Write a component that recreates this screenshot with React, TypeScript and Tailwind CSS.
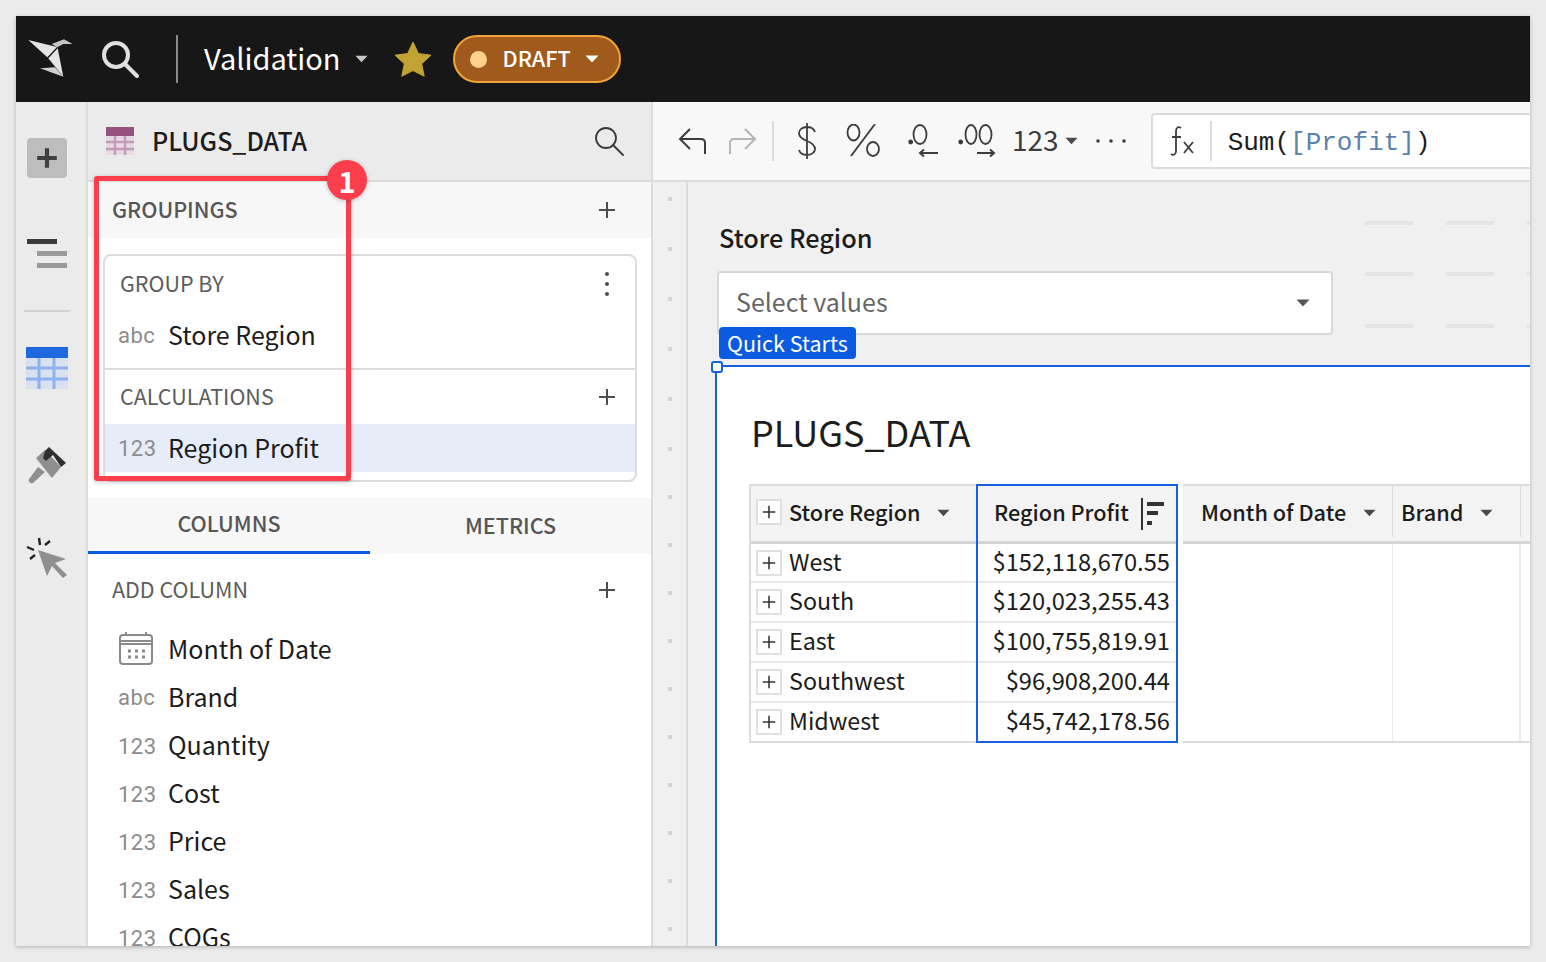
const sans = "font-['Noto_Sans_CJK_SC','Noto_Sans',sans-serif]"

function Caret({ className = 'w-[14px] h-[8px]', color = '#4a4a4a' }: { className?: string; color?: string }) {
  return (
    <svg className={className} viewBox="0 0 14 8">
      <path d="M0.5 0.5h13L7 7.5z" fill={color} />
    </svg>
  )
}

function Plus({ size = 18, color = '#4d4d4d', weight = 2 }: { size?: number; color?: string; weight?: number }) {
  return (
    <svg width={size} height={size} viewBox="0 0 18 18" fill="none" stroke={color} strokeWidth={weight}>
      <path d="M9 1v16M1 9h16" />
    </svg>
  )
}

function TypeTag({ label, low }: { label: string; low?: boolean }) {
  return (
    <span className={`w-[37px] text-[22px] leading-[30px] text-[#8c8c8c] font-['Roboto',sans-serif] tracking-[0.5px] shrink-0 ${low ? 'mt-1' : 'mt-[2px]'}`}>
      {label}
    </span>
  )
}

function FieldRow({ tag, name }: { tag: string; name: string }) {
  return (
    <div className="h-12 flex items-center gap-[13px] pl-[30px]">
      <TypeTag label={tag} low={tag === '123'} />
      <span className="mb-[2px] text-[25px] leading-[34px] text-[#1c1c1c]">{name}</span>
    </div>
  )
}

function RailButtons() {
  return (
    <div className="w-[72px] shrink-0 bg-[#ebebeb] border-r-2 border-[#dcdcdc] flex flex-col items-center pt-9 pr-[9px]">
      <div className="w-10 h-10 rounded bg-[#bdbdbd] flex items-center justify-center">
        <Plus size={22} color="#404040" weight={3.4} />
      </div>
      <svg className="mt-[60px]" width="42" height="32" viewBox="0 0 42 32">
        <rect x="1" y="1" width="30" height="5" fill="#3b3b3b" />
        <rect x="11" y="13" width="30" height="5" fill="#9a9a9a" />
        <rect x="11" y="25" width="30" height="5" fill="#9a9a9a" />
      </svg>
      <div className="mt-[40px] w-[46px] h-[2px] bg-[#d4d4d4]" />
      <svg className="mt-[35px]" width="42" height="42" viewBox="0 0 42 42">
        <rect width="42" height="42" fill="#d9e1f0" />
        <rect width="42" height="11" fill="#1f69e0" />
        <path d="M13 11v31M28 11v31M0 21h42M0 32h42" stroke="#8db2ee" strokeWidth="3" />
      </svg>
      <svg className="mt-[58px]" width="40" height="38" viewBox="0 0 40 38">
        <path d="M9 11L18 3L34 20L25 31z" fill="#8f8f8f" />
        <path d="M11 20L2 32a3 3 0 0 0 4 4L18 25z" fill="#8f8f8f" />
        <path d="M10.700 13L24 30" stroke="#b8b8b8" strokeWidth="1" />
        <path d="M22 0L39 16L34 20L26 8L19 14L16 11L18 4z" fill="#303030" />
      </svg>
      <svg className="mt-[52px]" width="42" height="42" viewBox="0 0 42 42">
        <path d="M12 13l28 9-11 4 12 12-4 3-11-12-5 10z" fill="#8f8f8f" />
        <path d="M13 1l1 7M24 4l-5 4M1 10l7 3M9 18l-5 4" stroke="#222" strokeWidth="2.400" />
      </svg>
    </div>
  )
}

function TopBar() {
  return (
    <div className="h-[86px] shrink-0 bg-[#171717] flex items-center pl-[12px]">
      <svg width="46" height="46" viewBox="0 0 46 46" className="mt-[-2px]">
        <path d="M0.300 5L29 12L19.300 22.300z" fill="#e4e4e4" />
        <path d="M23.700 9L36 4.300L44.700 9L35.300 9L29.300 12.300z" fill="#c4c4c4" />
        <path d="M20.300 23.300L29.700 13.300L35.300 41.700z" fill="#e4e4e4" />
        <path d="M12 33.300L27 32.300L35.300 41.700z" fill="#d0d0d0" />
      </svg>
      <svg className="ml-[27px]" width="38" height="38" viewBox="0 0 38 38" fill="none" stroke="#e0e0e0" strokeWidth="4" strokeLinecap="round">
        <circle cx="15" cy="15" r="12" />
        <path d="M24 24l12 12" />
      </svg>
      <div className="ml-[37px] w-[2px] h-12 bg-[#8a8a8a]" />
      <span className="ml-[26px] mb-[4px] text-[29px] leading-10 text-white">Validation</span>
      <Caret className="ml-[14px] w-[13px] h-[8px]" color="#c9c9c9" />
      <svg className="ml-[26px]" width="38" height="36" viewBox="0 0 38 36">
        <path d="M19 1l5.4 11.6 12.6 1.6-9.3 8.6 2.500 12.400L19 29.600 7.800 35.200l2.500-12.400L1 14.200l12.600-1.600z" fill="#c1a233" stroke="#c1a233" strokeLinejoin="round" />
      </svg>
      <div className="ml-[21px] w-[168px] h-12 rounded-full bg-[#a05a1c] border-2 border-[#f2a33a] flex items-center pl-[15px]">
        <span className="w-[17px] h-[17px] rounded-full bg-[#fdd28a]" />
        <span className="ml-[16px] mb-[2px] text-[21.700px] leading-7 font-medium text-white">DRAFT</span>
        <Caret className="ml-[14px] w-[14px] h-[8px]" color="#ffffff" />
      </div>
    </div>
  )
}

function SidePanel() {
  return (
    <div className="w-[565px] shrink-0 bg-white border-r-2 border-[#dcdcdc] flex flex-col overflow-hidden">
      <div className="h-[80px] shrink-0 bg-[#ebebeb] border-b-2 border-[#dcdcdc] flex items-center pl-[18px] pr-[27px]">
        <svg width="28" height="28" viewBox="0 0 28 28">
          <rect width="28" height="28" fill="#e9d9e5" />
          <rect width="28" height="9" fill="#96517f" />
          <path d="M9 9v19M19 9v19M0 15h28M0 22h28" stroke="#c39cb6" strokeWidth="2.500" />
        </svg>
        <span className="ml-[18px] mb-[2px] text-[25px] leading-9 font-medium text-[#1c1c1c]">PLUGS_DATA</span>
        <svg className="ml-auto" width="30" height="30" viewBox="0 0 30 30" fill="none" stroke="#3a3a3a" strokeWidth="1.800" strokeLinecap="round">
          <circle cx="12" cy="12" r="10" />
          <path d="M19 19l10 10" />
        </svg>
      </div>
      <div className="h-[56px] shrink-0 bg-[#f7f7f7] flex items-center justify-between pl-6 pr-[35px]">
        <span className="mb-[2px] text-[21.500px] leading-7 font-medium text-[#565656]">GROUPINGS</span>
        <Plus />
      </div>
      <div className="pt-4 pl-[15px] pr-[14px] pb-4 shrink-0">
        <div className="h-[228px] border-2 border-[#dcdcdc] rounded-lg flex flex-col">
          <div className="h-[114px] border-b-2 border-[#dcdcdc] shrink-0 flex flex-col">
            <div className="h-[56px] shrink-0 flex items-center justify-between pl-[15px] pr-[26px]">
              <span className="mb-[2px] text-[21.500px] leading-7 text-[#5c5c5c]">GROUP BY</span>
              <svg width="4" height="26" viewBox="0 0 4 26" fill="#4d4d4d">
                <circle cx="2" cy="3" r="2" />
                <circle cx="2" cy="13" r="2" />
                <circle cx="2" cy="23" r="2" />
              </svg>
            </div>
            <div className="flex items-center gap-[13px] pl-[13px] h-[45px]">
              <TypeTag label="abc" />
              <span className="mb-[2px] text-[25px] leading-[34px] text-[#1c1c1c]">Store Region</span>
            </div>
          </div>
          <div className="h-[54px] shrink-0 flex items-center justify-between pl-[15px] pr-[19px]">
            <span className="mb-[2px] text-[21.500px] leading-7 text-[#5c5c5c]">CALCULATIONS</span>
            <Plus />
          </div>
          <div className="h-12 bg-[#e6edf9] flex items-center gap-[13px] pl-[13px] shrink-0">
            <TypeTag label="123" />
            <span className="mb-[2px] text-[25px] leading-[34px] text-[#1c1c1c]">Region Profit</span>
          </div>
        </div>
      </div>
      <div className="h-[56px] shrink-0 bg-[#f7f7f7] flex">
        <div className="w-[282px] border-b-[3px] border-[#0a5be0] flex items-center justify-center pb-1 text-[21.500px] leading-7 font-medium text-[#565656]">COLUMNS</div>
        <div className="flex-1 flex items-center justify-center pb-[2px] text-[21.500px] leading-7 font-medium text-[#565656]">METRICS</div>
      </div>
      <div className="h-[71px] shrink-0 flex items-center justify-between pl-6 pr-[35px]">
        <span className="mb-[2px] text-[21.500px] leading-7 text-[#5c5c5c]">ADD COLUMN</span>
        <Plus />
      </div>
      <div className="flex flex-col">
        <div className="h-12 flex items-center gap-[14px] pl-[30px]">
          <svg className="w-[37px] shrink-0 ml-[-1px]" width="37" height="34" viewBox="0 0 37 34" fill="none" stroke="#8a8a8a" strokeWidth="2">
            <rect x="3" y="3" width="32" height="29" rx="3" />
            <path d="M3 9h32M3 12h32M9 0v4M29 0v4" />
            <path d="M11 19h3M18 19h3M25 19h3M11 25h3M18 25h3M25 25h3" strokeWidth="3" />
          </svg>
          <span className="mb-[2px] text-[25px] leading-[34px] text-[#1c1c1c]">Month of Date</span>
        </div>
        <FieldRow tag="abc" name="Brand" />
        <FieldRow tag="123" name="Quantity" />
        <FieldRow tag="123" name="Cost" />
        <FieldRow tag="123" name="Price" />
        <FieldRow tag="123" name="Sales" />
        <FieldRow tag="123" name="COGs" />
      </div>
    </div>
  )
}

function Toolbar() {
  return (
    <div className="h-[80px] shrink-0 bg-[#f8f8f8] border-b-2 border-[#dcdcdc] flex items-center pl-[25px] text-[#3d3d3d]">
      <svg width="30" height="28" viewBox="0 0 30 28" fill="none" stroke="#3d3d3d" strokeWidth="2">
        <path d="M12 2L2 12l10 10M2 12h21q4 0 4 4v11" />
      </svg>
      <svg className="ml-[19px]" width="30" height="28" viewBox="0 0 30 28" fill="none" stroke="#b5b5b5" strokeWidth="2">
        <path d="M18 2l10 10-10 10M28 12H7q-4 0-4 4v11" />
      </svg>
      <div className="ml-[15px] w-[2px] h-10 bg-[#dcdcdc]" />
      <svg className="ml-[21px]" width="24" height="36" viewBox="0 0 24 36" fill="none" stroke="#3d3d3d" strokeWidth="1.800">
        <path d="M20 9c-1-3-4-5-8-5-5 0-8 3-8 6 0 4 3 6 8 8s8 4 8 8c0 3-3 6-8 6-4 0-7-2-8-5M12 0v36" />
      </svg>
      <svg className="ml-[26px]" width="36" height="34" viewBox="0 0 36 34" fill="none" stroke="#3d3d3d" strokeWidth="1.800">
        <ellipse cx="8.500" cy="8.500" rx="6" ry="8" />
        <ellipse cx="28" cy="25" rx="6" ry="7" />
        <path d="M30 0L6 32" />
      </svg>
      <svg className="ml-[26px]" width="32" height="34" viewBox="0 0 32 34" fill="none" stroke="#3d3d3d" strokeWidth="1.800">
        <ellipse cx="13" cy="10.500" rx="6.500" ry="9.500" />
        <circle cx="3.700" cy="18" r="1.500" fill="#3d3d3d" />
        <path d="M31 29H13M17 25.500l-4 3.500 4 3.500" strokeWidth="2" />
      </svg>
      <svg className="ml-[19px]" width="38" height="34" viewBox="0 0 38 34" fill="none" stroke="#3d3d3d" strokeWidth="1.800">
        <ellipse cx="13" cy="10.500" rx="5.500" ry="9.500" />
        <ellipse cx="27.500" cy="10.500" rx="6" ry="9.500" />
        <circle cx="2.700" cy="18" r="1.500" fill="#3d3d3d" />
        <path d="M19 29h17M32 25.500l4 3.500-4 3.500" strokeWidth="2" />
      </svg>
      <span className="ml-4 mb-[2px] mt-[-3px] text-[28px] leading-9 text-[#3d3d3d]">123</span>
      <Caret className="ml-[6px] w-[13px] h-[8px]" />
      <svg className="ml-[18px]" width="30" height="4" viewBox="0 0 30 4" fill="#3d3d3d">
        <circle cx="2" cy="2" r="1.800" />
        <circle cx="15" cy="2" r="1.800" />
        <circle cx="28" cy="2" r="1.800" />
      </svg>
      <div className="ml-[25px] flex-1 h-[56px] bg-white border-2 border-r-0 border-[#dcdcdc] rounded-l flex items-center">
        <svg className="ml-[16px] mr-[15px] shrink-0" width="26" height="32" viewBox="0 0 26 32" fill="none" stroke="#3d3d3d" strokeWidth="1.800">
          <path d="M12 3c-3-2-5 0-5 3v20c0 3-2 5-5 3M3 12h9M15 17l9 11M24 17l-9 11" />
        </svg>
        <div className="w-[2px] h-10 bg-[#dcdcdc]" />
        <span className="ml-[16px] mt-[3px] text-[26px] leading-8 text-[#1c1c1c] font-['Liberation_Mono',monospace]">
          Sum(<span className="text-[#5a82ad]">[Profit]</span>)
        </span>
      </div>
    </div>
  )
}

function ExpandBox() {
  return (
    <span className="ml-[5px] w-[26px] h-[26px] shrink-0 border-2 border-[#e0e0e0] bg-white flex items-center justify-center">
      <Plus size={14} color="#333333" />
    </span>
  )
}

const rows = [
  { region: 'West', profit: '$152,118,670.55' },
  { region: 'South', profit: '$120,023,255.43' },
  { region: 'East', profit: '$100,755,819.91' },
  { region: 'Southwest', profit: '$96,908,200.44' },
  { region: 'Midwest', profit: '$45,742,178.56' },
]

const rowHeight = ['h-[39px]', 'h-10', 'h-10', 'h-10', 'h-[38px]']

function DataTable() {
  return (
    <div className="flex items-start w-[900px] ml-[-2px]">
      {/* region column */}
      <div className="w-[227px] shrink-0 border-2 border-r-0 border-[#dcdcdc] bg-white">
        <div className="h-[51px] pb-1 bg-[#f3f3f3] border-b-[3px] border-[#d4d4d4] box-content flex items-center">
          <ExpandBox />
          <span className="ml-[7px] text-[21.700px] leading-8 font-medium text-[#1c1c1c]">Store Region</span>
          <Caret className="ml-[16px] w-[13px] h-[8px] mt-[2px]" />
        </div>
        {rows.map((r, i) => (
          <div key={r.region} className={`${rowHeight[i]} flex items-center ${i < 4 ? 'border-b-2 border-[#e8e8e8]' : ''}`}>
            <ExpandBox />
            <span className="ml-[7px] mb-1 text-[23.300px] leading-8 text-[#1c1c1c]">{r.region}</span>
          </div>
        ))}
      </div>
      {/* selected column */}
      <div className="w-[202px] shrink-0 border-2 border-[#1560e0] bg-white">
        <div className="h-[51px] pb-1 bg-[#f3f3f3] border-b-[3px] border-[#d4d4d4] box-content flex items-center pl-[16px] whitespace-nowrap">
          <span className="text-[21.700px] leading-8 font-medium text-[#1c1c1c]">Region Profit</span>
          <svg className="ml-[12px] mt-[4px] shrink-0" width="24" height="32" viewBox="0 0 24 32">
            <rect x="0" y="0" width="2" height="32" fill="#333333" />
            <rect x="6" y="4" width="17" height="4" fill="#333333" />
            <rect x="6" y="13" width="11" height="4" fill="#333333" />
            <rect x="6" y="23" width="5" height="4" fill="#333333" />
          </svg>
        </div>
        {rows.map((r, i) => (
          <div key={r.region} className={`${rowHeight[i]} flex items-center justify-end pr-[6px] ${i < 4 ? 'border-b-2 border-[#e8e8e8]' : ''}`}>
            <span className="mb-1 text-[23.700px] leading-8 text-[#1c1c1c]">{r.profit}</span>
          </div>
        ))}
      </div>
      <div className="w-[5px] shrink-0" />
      {/* empty columns */}
      <div className="flex-1 border-y-2 border-[#dcdcdc] bg-white h-[259px] flex flex-col">
        <div className="h-[51px] pb-1 bg-[#f3f3f3] border-b-[3px] border-[#d4d4d4] box-content flex">
          <div className="w-[210px] h-[51px] flex items-center border-r border-[#dcdcdc] pl-[18px]">
            <span className="text-[21.700px] leading-8 font-medium text-[#1c1c1c]">Month of Date</span>
            <Caret className="ml-[17px] w-[13px] h-[8px] mt-[2px]" />
          </div>
          <div className="w-[128px] h-[51px] flex items-center border-r border-[#dcdcdc] pl-[8px]">
            <span className="text-[21.700px] leading-8 font-medium text-[#1c1c1c]">Brand</span>
            <Caret className="ml-[17px] w-[13px] h-[8px] mt-[2px]" />
          </div>
        </div>
        <div className="flex-1 flex">
          <div className="w-[210px] border-r border-[#e8e8e8]" />
          <div className="w-[128px] border-r-2 border-[#e8e8e8]" />
        </div>
      </div>
    </div>
  )
}

function Canvas() {
  return (
    <div className="flex-1 flex min-w-0 bg-[#f0f0f0] overflow-hidden">
      <div className="w-[35px] shrink-0 border-r-2 border-[#dcdcdc] flex flex-col items-center pt-[15px]">
        {Array.from({ length: 16 }, (_, i) => (
          <span key={i} className={`w-[4px] h-[4px] bg-[#d4d4d4] shrink-0 ${i < 5 ? 'mb-[46px]' : 'mb-[44px]'}`} />
        ))}
      </div>
      <div className="relative flex-1 min-w-0 flex flex-col">
        {[39, 90, 142].map((top) => (
          <div key={top} className="absolute left-[677px] flex gap-[33px]" style={{ top }}>
            <span className="w-12 h-[4px] bg-[#e4e4e4]" />
            <span className="w-12 h-[4px] bg-[#e4e4e4]" />
            <span className="w-12 h-[4px] bg-[#e4e4e4]" />
          </div>
        ))}
        <div className="pl-[29px] pt-[39px] h-[183px] shrink-0">
          <div className="pl-[2px] text-[25.300px] leading-8 font-medium text-[#1c1c1c]">Store Region</div>
          <div className="mt-[18px] w-[616px] h-[64px] bg-white border-2 border-[#d9d9d9] rounded flex items-center justify-between pl-[17px] pr-[21px]">
            <span className="mb-1 text-[25px] leading-[34px] text-[#666666]">Select values</span>
            <Caret className="w-[14px] h-[8px]" color="#555555" />
          </div>
        </div>
        <span className="absolute left-[31px] top-[145px] h-8 w-[137px] rounded-sm bg-[#0a5be0] text-white text-[21.500px] leading-8 text-center">
          Quick Starts
        </span>
        <div className="relative flex-1 ml-[27px] bg-white border-l-2 border-t-2 border-[#1560e0] pl-[34px]">
          <span className="absolute left-[-6px] top-[-6px] w-[12px] h-[12px] rounded-[3px] bg-white border-2 border-[#1560e0]" />
          <div className="pt-[40px] h-[117px] text-[36px] leading-[48px] text-[#1c1c1c]">PLUGS_DATA</div>
          <DataTable />
        </div>
      </div>
    </div>
  )
}

export default function App() {
  return (
    <div className={`${sans} w-[1546px] h-[962px] bg-[#ebebeb] p-4 overflow-hidden`}>
      <div className="relative w-[1514px] h-[930px] flex flex-col overflow-hidden shadow-[0_1px_4px_rgba(0,0,0,0.25)]">
        <TopBar />
        <div className="flex-1 flex min-h-0">
          <RailButtons />
          <SidePanel />
          <div className="flex-1 flex flex-col min-w-0">
            <Toolbar />
            <Canvas />
          </div>
        </div>
        {/* annotation */}
        <div className="absolute left-[78px] top-[160px] w-[257px] h-[305px] border-[5px] border-[#fb3d4c] rounded-[3px] shadow-[0_1px_4px_rgba(0,0,0,0.25)]" />
        <span className="absolute left-[311px] top-[144px] w-10 h-10 rounded-full bg-[#fb3d4c] text-white text-[29px] leading-10 font-bold text-center shadow-[0_1px_4px_rgba(0,0,0,0.25)]">
          1
        </span>
      </div>
    </div>
  )
}
